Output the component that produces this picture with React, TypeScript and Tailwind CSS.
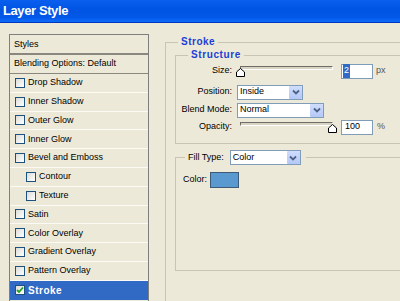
import React from "react";

type Effect = { label: string; indent?: boolean };

const effects: Effect[] = [
  { label: "Drop Shadow" },
  { label: "Inner Shadow" },
  { label: "Outer Glow" },
  { label: "Inner Glow" },
  { label: "Bevel and Emboss" },
  { label: "Contour", indent: true },
  { label: "Texture", indent: true },
  { label: "Satin" },
  { label: "Color Overlay" },
  { label: "Gradient Overlay" },
  { label: "Pattern Overlay" },
];

const CheckBox = ({ checked = false }: { checked?: boolean }) => (
  <span className="flex h-[10px] w-[10px] shrink-0 items-center justify-center border border-[#1c5180] bg-[linear-gradient(135deg,#dcdcd7,#ffffff)]">
    {checked && (
      <svg width="8" height="8" viewBox="0 0 8 8">
        <path d="M1 4 L3 6 L7 1.5" fill="none" stroke="#21a121" strokeWidth="1.8" />
      </svg>
    )}
  </span>
);

const Chevron = () => (
  <span className="flex h-[13px] w-[13px] items-center justify-center rounded-[1px] bg-[linear-gradient(#cfdcfd,#b4c8f6)]">
    <svg width="8" height="6" viewBox="0 0 8 6">
      <path d="M1 1.5 L4 4.5 L7 1.5" fill="none" stroke="#4d6185" strokeWidth="1.8" />
    </svg>
  </span>
);

const Select = ({ value, width }: { value: string; width: string }) => (
  <div className={`flex h-[15px] items-center border border-[#7f9db9] bg-white ${width}`}>
    <span className="flex-1 pl-[2px]">{value}</span>
    <Chevron />
  </div>
);

// slider groove with the little pentagon thumb hanging below it
const Slider = ({ right = false }: { right?: boolean }) => (
  <div className="relative ml-[3px] h-[16px] w-[93px]">
    <div className="mt-[3px] h-[4px] border border-[#6f6d66] border-b-white border-r-white bg-[#d8d4c4]" />
    <svg
      className={right ? "absolute right-[-4px] top-[5px]" : "absolute left-[-4px] top-[5px]"}
      width="9"
      height="9"
      viewBox="0 0 9 9"
    >
      <path d="M4.5 0.5 L8.5 4 L8.5 8.5 L0.5 8.5 L0.5 4 Z" fill="white" stroke="black" />
    </svg>
  </div>
);

const NumberBox = ({ children }: { children: React.ReactNode }) => (
  <div className="ml-[8px] flex h-[15px] w-[32px] items-center border border-[#7f9db9] bg-white pl-[1px]">
    {children}
  </div>
);

const Row = ({ label, className, children }: { label: string; className: string; children: React.ReactNode }) => (
  <div className={`flex h-[16px] items-center ${className}`}>
    <span className="w-[56px] shrink-0 text-right">{label}</span>
    <div className="ml-[5px] flex items-center">{children}</div>
  </div>
);

const App = () => {
  return (
    <div className="h-[301px] w-[400px] overflow-hidden bg-[#ece9d8] font-['Liberation_Sans',Arial,sans-serif] text-[9px] text-black">
      {/* title bar */}
      <div className="flex h-[23px] items-center border-b border-[#0037bf] bg-[linear-gradient(#0a5fee,#0054e3_45%,#0258e8_80%,#0c68f6_95%)] pl-[3px]">
        <span className="text-[13px] font-bold tracking-[-0.4px] text-white">Layer Style</span>
      </div>

      <div className="flex">
        {/* left list */}
        <div className="ml-[9px] mt-[11px] w-[140px] shrink-0 border border-[#7f7f7f] pb-[20px]">
          <div className="flex h-[20px] items-center border-b-2 border-[#8a887e] pl-[4px] pt-[1px]">Styles</div>
          <div className="flex h-[19px] items-center border-b border-[#8a887e] pl-[4px]">Blending Options: Default</div>
          {effects.map((e) => (
            <div
              key={e.label}
              className={`flex h-[18.8px] items-center gap-[3px] border-b border-[#fbfaf4] ${e.indent ? "pl-[16px]" : "pl-[5px]"}`}
            >
              <CheckBox />
              <span>{e.label}</span>
            </div>
          ))}
          <div className="flex h-[19px] items-center gap-[3px] bg-[#316ac5] pl-[5px]">
            <CheckBox checked />
            <span className="text-[10px] font-bold tracking-[0.5px] text-white">Stroke</span>
          </div>
        </div>

        {/* right settings */}
        <fieldset className="ml-[16px] mt-[13px] h-[300px] w-[270px] shrink-0 border border-[#c8c5b5]">
          <legend className="ml-[12px] px-[3px] text-[10px] font-bold leading-[12px] tracking-[0.5px] text-[#1c3fd6]">
            Stroke
          </legend>

          <fieldset className="ml-[9px] mt-[1px] w-[260px] border border-[#c8c5b5] pb-[8px]">
            <legend className="ml-[12px] px-[3px] text-[10px] font-bold leading-[12px] tracking-[0.6px] text-[#1c3fd6]">
              Structure
            </legend>
            <Row label="Size:" className="mt-[2px]">
              <Slider />
              <NumberBox>
                <span className="bg-[#316ac5] px-[1px] text-white">2</span>
              </NumberBox>
              <span className="ml-[3px] text-[#555]">px</span>
            </Row>
            <Row label="Position:" className="mt-[5px]">
              <Select value="Inside" width="w-[66px]" />
            </Row>
            <Row label="Blend Mode:" className="mt-[2px]">
              <Select value="Normal" width="w-[87px]" />
            </Row>
            <Row label="Opacity:" className="mt-[1px]">
              <Slider right />
              <NumberBox>
                <span className="pl-[2px]">100</span>
              </NumberBox>
              <span className="ml-[4px] text-[#555]">%</span>
            </Row>
          </fieldset>

          <fieldset className="ml-[9px] mt-[6px] h-[121px] w-[260px] border border-[#c8c5b5]">
            <legend className="ml-[9px] flex items-center pl-[3px] pr-[5px]">
              <span>Fill Type:</span>
              <div className="ml-[6px]">
                <Select value="Color" width="w-[71px]" />
              </div>
            </legend>
            <div className="mt-[7px] flex h-[16px] items-center pl-[7px]">
              <span>Color:</span>
              <span className="ml-[3px] h-[16px] w-[29px] border border-[#3d5a78] bg-[#5a99cf]" />
            </div>
          </fieldset>
        </fieldset>
      </div>
    </div>
  );
};

export default App;
